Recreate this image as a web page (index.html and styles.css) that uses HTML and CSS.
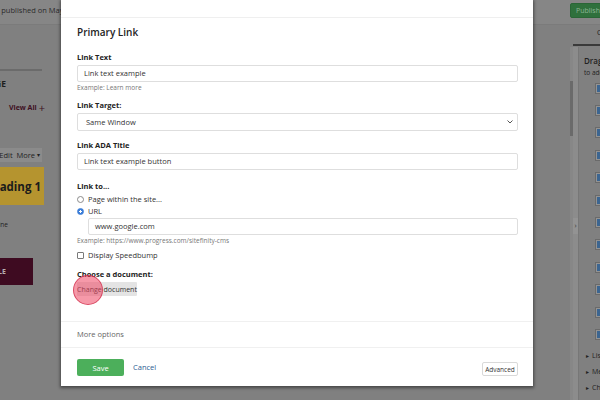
FILE: index.html
```html
<!DOCTYPE html>
<html lang="en">
<head>
    <meta charset="UTF-8">
    <meta name="viewport" content="width=device-width, initial-scale=1.0">
    <title>Edit Button - Primary Link</title>
    <link rel="stylesheet" href="styles.css">
</head>
<body>
    <div class="page">
        <header class="topbar">
            <div class="topbar-left"><span>Last published on May 24</span></div>
            <button class="publish-btn">Publish</button>
        </header>

        <div class="workspace">
            <!-- page tree / sections, mostly hidden behind the dialog -->
            <aside class="left-panel">
                <div class="lp-rule"></div>
                <div class="lp-heading">PAGE</div>
                <div class="lp-viewall">View All <span class="plus">+</span></div>
                <div class="lp-toolbar">Edit&nbsp;&nbsp;More <span class="caret">▾</span></div>
                <div class="lp-banner">Heading 1</div>
                <div class="lp-note">Headline</div>
                <div class="lp-cta">TITLE</div>
            </aside>

            <main class="canvas"></main>

            <aside class="right-panel">
                <div class="rp-tabs"><span>Content</span></div>
                <div class="rp-body">
                    <div class="rp-track"><div class="rp-thumb"></div></div>
                    <div class="rp-split"><div class="rp-toggle">›</div></div>
                    <div class="rp-content">
                        <div class="rp-drag">Drag widgets</div>
                        <div class="rp-hint">to add them</div>
                        <ul class="rp-widgets">
                            <li><span class="widget-icon"></span></li>
                            <li><span class="widget-icon"></span></li>
                            <li><span class="widget-icon"></span></li>
                            <li><span class="widget-icon"></span></li>
                            <li><span class="widget-icon"></span></li>
                            <li><span class="widget-icon"></span></li>
                            <li><span class="widget-icon"></span></li>
                            <li><span class="widget-icon"></span></li>
                            <li><span class="widget-icon"></span></li>
                            <li><span class="widget-icon"></span></li>
                            <li><span class="widget-icon"></span></li>
                            <li><span class="widget-icon"></span></li>
                        </ul>
                        <ul class="rp-groups">
                            <li>Lists</li>
                            <li>Media</li>
                            <li>Charts</li>
                        </ul>
                    </div>
                </div>
            </aside>
        </div>
    </div>

    <!-- dialog -->
    <div class="modal">
        <div class="modal-head"></div>
        <div class="modal-body">
            <h2 class="modal-title">Primary Link</h2>

            <label class="field-label first">Link Text</label>
            <div class="text-input">Link text example</div>
            <p class="hint">Example: Learn more</p>

            <label class="field-label gap-8">Link Target:</label>
            <div class="text-input select">
                <span>Same Window</span>
                <svg class="chevron" width="6" height="4" viewBox="0 0 6 4"><path d="M0.5 0.5 L3 3 L5.5 0.5" fill="none" stroke="#555" stroke-width="1"/></svg>
            </div>

            <label class="field-label gap-9">Link ADA Title</label>
            <div class="text-input">Link text example button</div>

            <label class="field-label gap-11">Link to...</label>
            <div class="choice first-choice"><span class="radio"></span>Page within the site...</div>
            <div class="choice"><span class="radio checked"></span>URL</div>
            <div class="text-input indented">www.google.com</div>
            <p class="hint">Example: https://www.progress.com/sitefinity-cms</p>
            <div class="choice check-row"><span class="checkbox"></span>Display Speedbump</div>

            <label class="field-label gap-8">Choose a document:</label>
            <div class="doc-wrap">
                <button class="doc-btn">Change document</button>
                <span class="tap-mark"></span>
            </div>
        </div>

        <div class="modal-more">More options</div>

        <div class="modal-foot">
            <button class="save-btn">Save</button>
            <a class="cancel-link">Cancel</a>
            <button class="advanced-btn">Advanced</button>
        </div>
    </div>
</body>
</html>
```

FILE: styles.css
```css
* {
    margin: 0;
    padding: 0;
    box-sizing: border-box;
}

body {
    width: 600px;
    height: 400px;
    overflow: hidden;
    position: relative;
    background: #808080;
    font-family: "Open Sans", "Liberation Sans", sans-serif;
    color: #222;
}

ul {
    list-style: none;
}

button {
    font-family: inherit;
    border: none;
    cursor: pointer;
}

.page {
    height: 400px;
    display: flex;
    flex-direction: column;
}

/* top bar (dimmed by overlay) */
.topbar {
    height: 25px;
    flex: none;
    display: flex;
    justify-content: space-between;
    align-items: flex-start;
    background: #868686;
    border-bottom: 1px solid #7b7b7b;
}

.topbar-left {
    width: 74px;
    display: flex;
    justify-content: flex-end;
    white-space: nowrap;
    overflow: hidden;
    font-size: 7.5px;
    line-height: 12px;
    padding-top: 4px;
    color: #2b2b2b;
}

.publish-btn {
    margin-top: 3px;
    margin-right: -6px;
    width: 36px;
    height: 15px;
    background: #2f703c;
    border: 1px solid #2a6536;
    border-radius: 2px;
    color: #8db594;
    font-size: 7px;
    text-align: left;
    padding-left: 5px;
}

.workspace {
    flex: 1;
    min-height: 0;
    display: flex;
}

/* left panel */
.left-panel {
    width: 61px;
    flex: none;
    overflow: hidden;
    display: flex;
    flex-direction: column;
    align-items: flex-start;
}

.left-panel > div {
    display: flex;
    justify-content: flex-end;
    white-space: nowrap;
}

.lp-rule {
    width: 42px;
    height: 2px;
    margin-top: 44px;
    background: #6b6b6b;
}

.lp-heading {
    width: 6px;
    margin-top: 8px;
    font-size: 8.5px;
    font-weight: 700;
    line-height: 10px;
    color: #1e1e1e;
}

.lp-viewall {
    width: 45px;
    margin-top: 14px;
    align-items: center;
    font-size: 7px;
    font-weight: 700;
    line-height: 10px;
    color: #3e0f22;
}

.lp-viewall .plus {
    font-size: 11px;
    font-weight: 400;
    margin-left: 2px;
}

.lp-toolbar {
    width: 42px;
    height: 14px;
    margin-top: 35px;
    padding-right: 2px;
    background: #8b8b8b;
    font-size: 7.5px;
    line-height: 14px;
    color: #232323;
}

.lp-toolbar .caret {
    font-size: 6px;
    margin-left: 2px;
}

.lp-banner {
    width: 44px;
    height: 38px;
    margin-top: 5px;
    padding-right: 3px;
    align-items: center;
    background: #b5942f;
    font-size: 11.5px;
    font-weight: 700;
    color: #1b1b1b;
}

.lp-note {
    width: 8px;
    margin-top: 15px;
    font-size: 6.5px;
    line-height: 10px;
    color: #222;
}

.lp-cta {
    width: 33px;
    height: 27px;
    margin-top: 28px;
    padding-right: 27px;
    align-items: center;
    background: #3e0b21;
    color: #b7adb1;
    font-size: 7px;
    font-weight: 700;
}

.canvas {
    flex: 1;
}

/* right panel */
.right-panel {
    width: 30px;
    flex: none;
    display: flex;
    flex-direction: column;
    overflow: hidden;
}

.rp-tabs {
    height: 21px;
    margin-left: 3px;
    padding-left: 24px;
    border-bottom: 2px solid #3a3a3a;
    font-size: 7px;
    line-height: 14px;
    padding-top: 1px;
    white-space: nowrap;
    color: #1e1e1e;
}

.rp-body {
    flex: 1;
    display: flex;
    margin-top: 1px;
}

.rp-track {
    width: 3px;
    flex: none;
    background: #878787;
}

.rp-thumb {
    margin-top: 34px;
    height: 55px;
    background: #6a6a6a;
}

.rp-split {
    width: 5px;
    flex: none;
    background: #8c8c8c;
}

.rp-toggle {
    margin-top: 171px;
    height: 16px;
    background: #939393;
    font-size: 7px;
    line-height: 16px;
    text-align: center;
    color: #333;
}

.rp-content {
    flex: 1;
    padding-left: 5px;
    padding-top: 9px;
    white-space: nowrap;
    border-left: 1px solid #777;
}

.rp-drag {
    font-size: 8px;
    font-weight: 600;
    line-height: 10px;
    color: #222;
}

.rp-hint {
    margin-top: 2px;
    font-size: 6.5px;
    line-height: 9px;
    color: #222;
}

.rp-widgets li {
    height: 22.4px;
    display: flex;
    align-items: center;
    padding-left: 11px;
}

.widget-icon {
    width: 12px;
    height: 11px;
    border: 1px solid #6a6a6a;
    background: #939393;
    padding: 1px;
    display: flex;
}

.widget-icon::before {
    content: '';
    width: 5px;
    height: 7px;
    background: #3c6590;
}

.rp-groups {
    margin-top: 2px;
    padding-left: 2px;
}

.rp-groups li {
    font-size: 7px;
    line-height: 16px;
    color: #222;
}

.rp-groups li::before {
    content: '▸';
    font-size: 6px;
    margin-right: 3px;
}

/* dialog */
.modal {
    position: absolute;
    left: 61px;
    top: 0;
    width: 472px;
    height: 386px;
    background: #fff;
    box-shadow: 0 1px 3px 1px rgba(0, 0, 0, 0.45);
    display: flex;
    flex-direction: column;
}

.modal-head {
    height: 18px;
    flex: none;
    border-bottom: 1px solid #efefef;
}

.modal-body {
    height: 303px;
    flex: none;
    padding: 7px 15px 0 16px;
    display: flex;
    flex-direction: column;
}

.modal-title {
    font-size: 10px;
    font-weight: 600;
    line-height: 14px;
    color: #222;
}

.field-label {
    display: block;
    font-size: 7.5px;
    font-weight: 700;
    line-height: 10px;
    color: #222;
}

.field-label.first { margin-top: 13px; }
.field-label.gap-8 { margin-top: 8px; }
.field-label.gap-9 { margin-top: 9px; }
.field-label.gap-11 { margin-top: 11px; }

.text-input {
    height: 17px;
    margin-top: 3px;
    padding: 0 6px;
    border: 1px solid #dedede;
    border-radius: 2px;
    font-size: 7.5px;
    line-height: 15px;
    color: #333;
}

.text-input.select {
    height: 18px;
    line-height: 16px;
    padding: 0 4px 0 8px;
    display: flex;
    justify-content: space-between;
    align-items: center;
}

.text-input.indented {
    margin: 1px 0 0 11px;
}

.hint {
    margin-top: 1px;
    font-size: 6.5px;
    line-height: 9px;
    color: #777;
}

.choice {
    height: 12px;
    display: flex;
    align-items: center;
    font-size: 7.5px;
    color: #333;
}

.choice.first-choice {
    margin-top: 2px;
}

.choice.check-row {
    margin-top: 4px;
}

.radio {
    width: 7px;
    height: 7px;
    margin-right: 4px;
    border: 1px solid #8a8a8a;
    border-radius: 50%;
}

.radio.checked {
    border-color: #3b7dd8;
    background: radial-gradient(circle, #fff 0 1px, #3b7dd8 1.3px);
}

.checkbox {
    width: 7px;
    height: 7px;
    margin-right: 4px;
    border: 1px solid #7a7a7a;
    border-radius: 1px;
}

.doc-wrap {
    position: relative;
    margin-top: 3px;
    align-self: flex-start;
}

.doc-btn {
    display: block;
    width: 60px;
    height: 14px;
    background: #e4e4e4;
    border-radius: 1px;
    font-size: 7px;
    color: #333;
}

.tap-mark {
    position: absolute;
    left: -4px;
    top: -7px;
    width: 30px;
    height: 30px;
    border-radius: 50%;
    background: rgba(238, 70, 98, 0.55);
    border: 1px solid rgba(205, 40, 70, 0.7);
}

.modal-more {
    height: 27px;
    flex: none;
    padding-left: 16px;
    border-top: 1px solid #f0f0f0;
    border-bottom: 1px solid #f0f0f0;
    font-size: 7.5px;
    line-height: 25px;
    color: #666;
}

.modal-foot {
    display: flex;
    align-items: flex-start;
    padding: 11px 15px 0 16px;
}

.save-btn {
    width: 47px;
    height: 17px;
    background: #4caf5b;
    border-radius: 2px;
    color: #fff;
    font-size: 7.5px;
}

.cancel-link {
    margin-left: 9px;
    font-size: 7.5px;
    line-height: 17px;
    color: #2d5e94;
}

.advanced-btn {
    margin-left: auto;
    margin-top: 3px;
    width: 36px;
    height: 14px;
    background: #fff;
    border: 1px solid #d9d9d9;
    border-radius: 2px;
    font-size: 6.5px;
    color: #333;
}
```
